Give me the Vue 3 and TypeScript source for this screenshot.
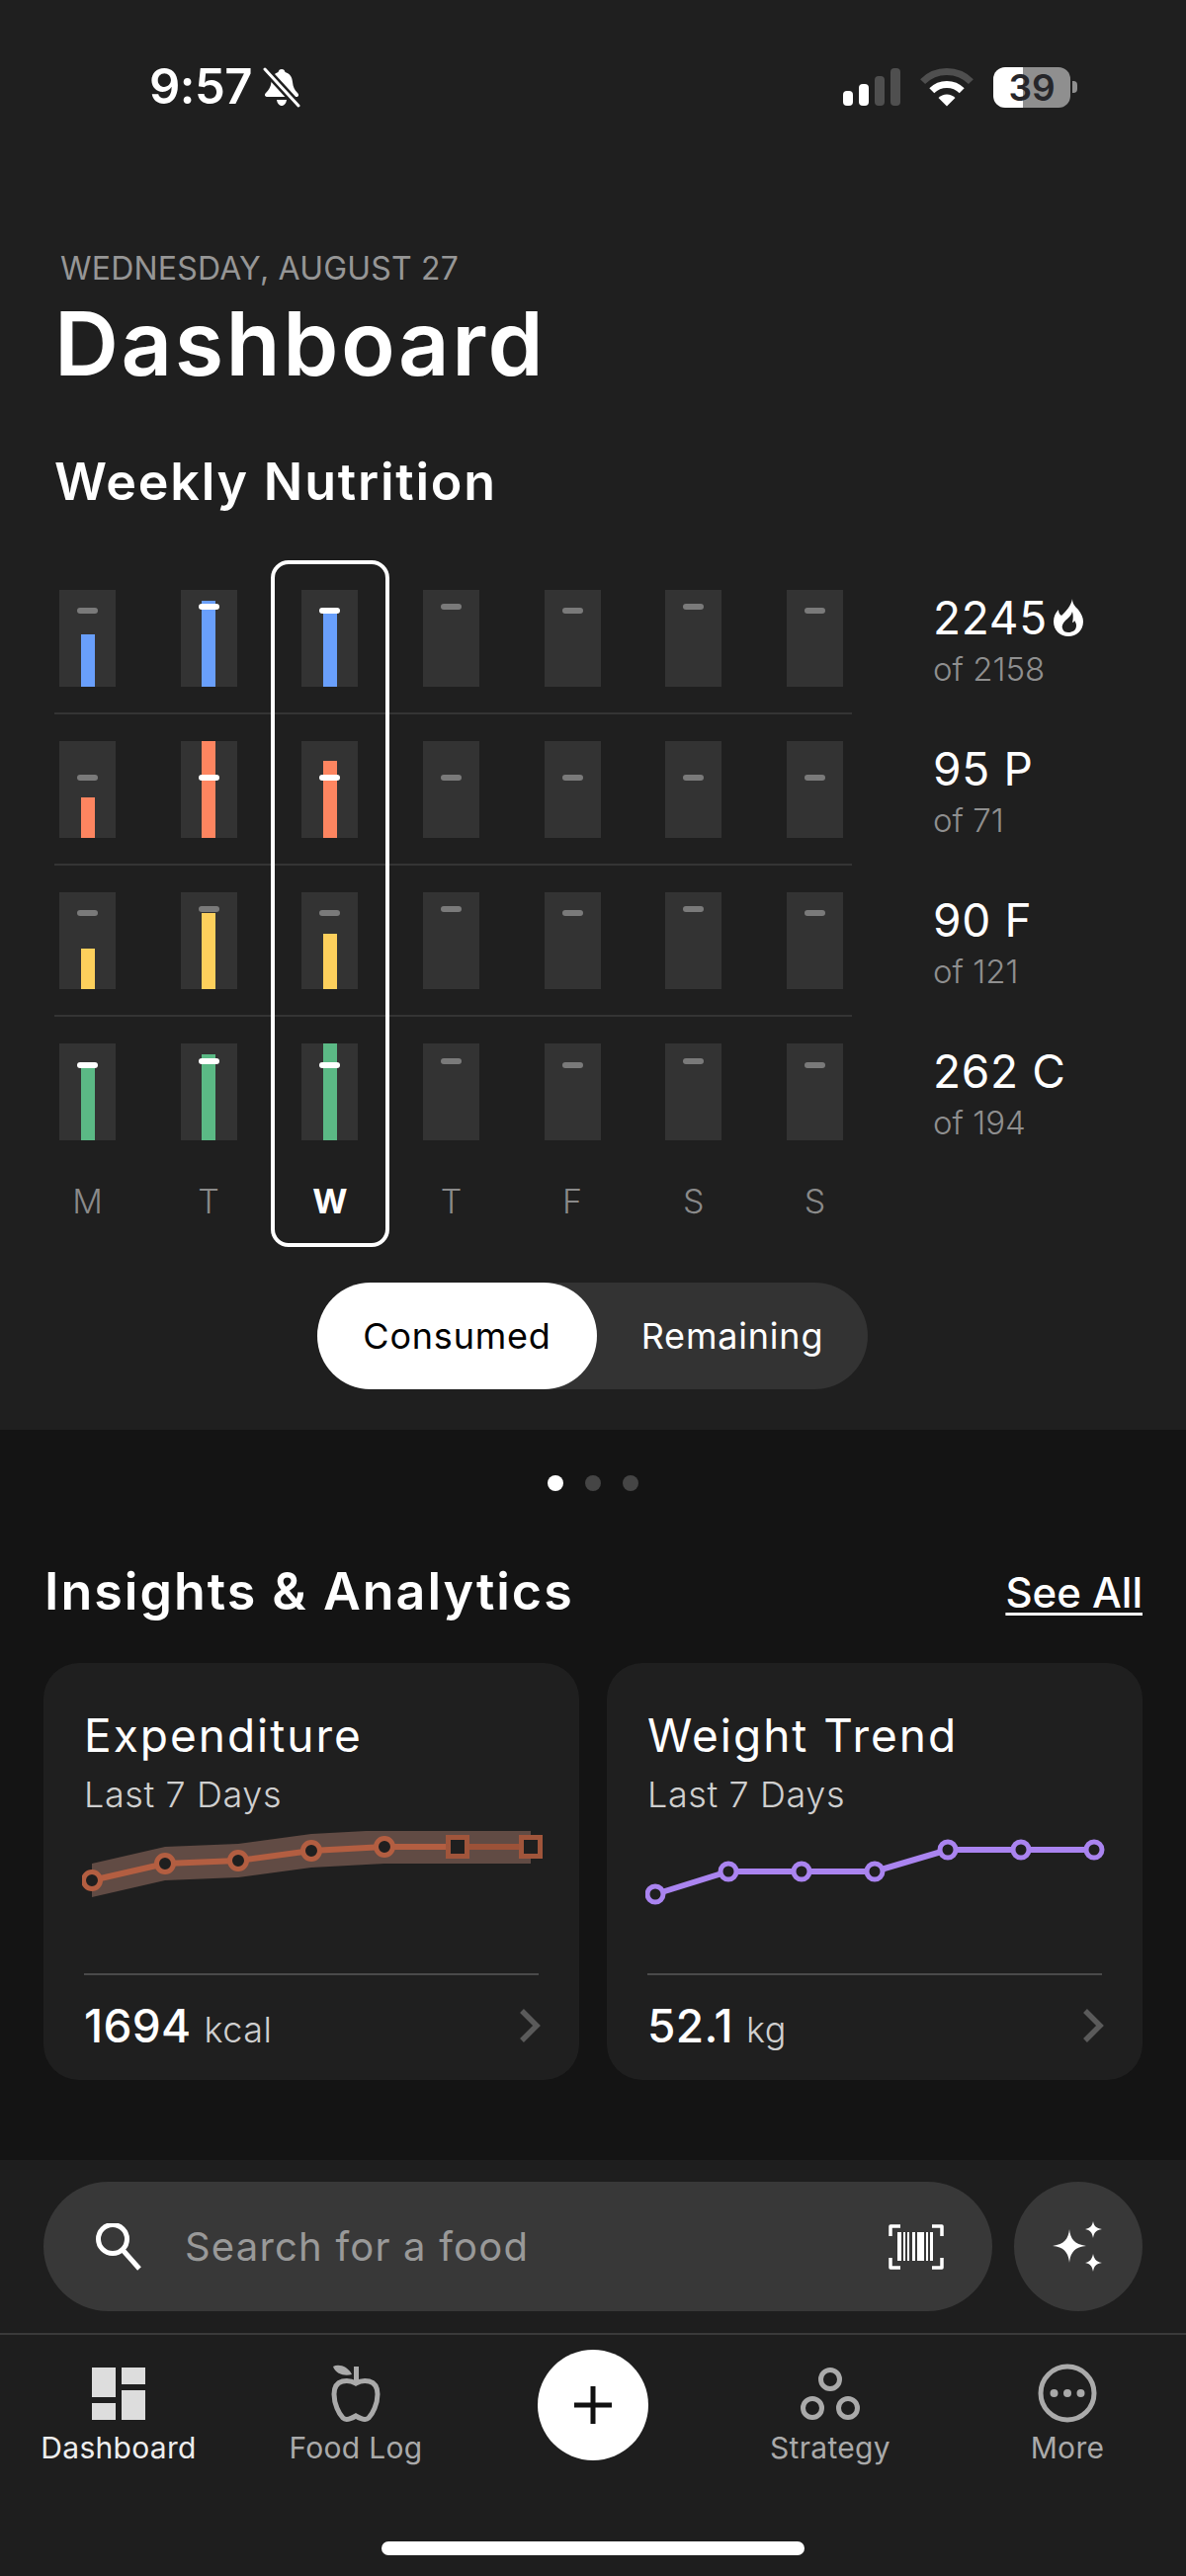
<script setup lang="ts">
type Bar = { fill: number; mark: number; lit?: boolean }

// fill height and marker offset inside a 98px track
const rows: { color: string; bars: Bar[] }[] = [
  {
    color: '#699ffb',
    bars: [
      { fill: 53, mark: 21 },
      { fill: 87, mark: 17, lit: true },
      { fill: 77, mark: 21, lit: true },
      { fill: 0, mark: 17 },
      { fill: 0, mark: 21 },
      { fill: 0, mark: 17 },
      { fill: 0, mark: 21 },
    ],
  },
  {
    color: '#fd8560',
    bars: [
      { fill: 41, mark: 37 },
      { fill: 98, mark: 37, lit: true },
      { fill: 78, mark: 37, lit: true },
      { fill: 0, mark: 37 },
      { fill: 0, mark: 37 },
      { fill: 0, mark: 37 },
      { fill: 0, mark: 37 },
    ],
  },
  {
    color: '#fdd05c',
    bars: [
      { fill: 41, mark: 21 },
      { fill: 77, mark: 17 },
      { fill: 56, mark: 21 },
      { fill: 0, mark: 17 },
      { fill: 0, mark: 21 },
      { fill: 0, mark: 17 },
      { fill: 0, mark: 21 },
    ],
  },
  {
    color: '#5bb985',
    bars: [
      { fill: 75, mark: 22, lit: true },
      { fill: 87, mark: 18, lit: true },
      { fill: 98, mark: 22, lit: true },
      { fill: 0, mark: 18 },
      { fill: 0, mark: 22 },
      { fill: 0, mark: 18 },
      { fill: 0, mark: 22 },
    ],
  },
]

const stats = [
  { value: '2245', goal: 'of 2158', flame: true },
  { value: '95 P', goal: 'of 71' },
  { value: '90 F', goal: 'of 121' },
  { value: '262 C', goal: 'of 194' },
]

const days = ['M', 'T', 'W', 'T', 'F', 'S', 'S']

const xs = [10, 84, 158, 232, 306, 380, 454]
const expenditureY = [50, 33, 30, 20, 16, 16, 16]
const weightY = [46, 23, 23, 23, 1, 1, 1]

function line(ys: number[], offset = 0): string {
  return ys.map((y, i) => `${xs[i]},${y + offset}`).join(' ')
}

const band = `${line(expenditureY, -17)} ${line(expenditureY, 17).split(' ').reverse().join(' ')}`
</script>

<template>
  <div class="page">
    <section class="hero">
      <div class="status">
        <div class="status-left">
          <span class="clock">9:57</span>
          <svg class="bell" width="38" height="41" viewBox="0 0 38 41">
            <path d="M19 2c2 0 3 1 3.500 3 5 1.500 7 5 7.500 10 .5 5 2 8 5 11 2 2 1 4-1 4H5c-3 0-4-2-2-4 3-3 5-6 5.500-11C9 10 11 6.500 15.500 5 16 3 17 2 19 2z" fill="#fff" />
            <path d="M14 33h10c-.5 3.500-2.500 6-5 6s-4.500-2.500-5-6z" fill="#fff" />
            <path d="M2 2l34 37" stroke="#1f1f1f" stroke-width="8" />
            <path d="M2 2l34 37" stroke="#fff" stroke-width="3" stroke-linecap="round" />
          </svg>
        </div>
        <div class="status-right">
          <div class="signal">
            <i class="on" style="height: 15px"></i>
            <i class="on" style="height: 22px"></i>
            <i style="height: 30px"></i>
            <i style="height: 38px"></i>
          </div>
          <svg class="wifi" width="54" height="40" viewBox="0 0 54 40">
            <path d="M2.600 14.600a34.500 34.500 0 0 1 48.800 0" fill="none" stroke="#4f4f4f" stroke-width="7" />
            <path d="M11.800 23.800a21.500 21.500 0 0 1 30.400 0" fill="none" stroke="#fff" stroke-width="7" />
            <path d="M27 39.500l-8.500-8.500a12 12 0 0 1 17 0z" fill="#fff" />
          </svg>
          <div class="battery">
            <div class="battery-body"><span>39</span></div>
            <i class="battery-nub"></i>
          </div>
        </div>
      </div>

      <p class="date">WEDNESDAY, AUGUST 27</p>
      <h1 class="title">Dashboard</h1>
      <h2 class="weekly">Weekly Nutrition</h2>

      <div class="nutrition">
        <div class="chart">
          <div v-for="(row, r) in rows" :key="r" class="row">
            <div v-for="(bar, b) in row.bars" :key="b" class="track">
              <div class="fill" :style="{ height: bar.fill + 'px', background: row.color }"></div>
              <div class="mark" :class="{ lit: bar.lit }" :style="{ top: bar.mark + 'px' }"></div>
            </div>
          </div>
          <div class="days">
            <span v-for="(day, d) in days" :key="d" class="day" :class="{ today: d === 2 }">{{ day }}</span>
          </div>
          <div class="selected"></div>
        </div>
        <div class="stats">
          <div v-for="stat in stats" :key="stat.value" class="stat">
            <div class="stat-value">
              <span>{{ stat.value }}</span>
              <svg v-if="stat.flame" class="flame" width="30" height="38" viewBox="0 0 30 38">
                <path fill-rule="evenodd" d="M19 0c0 5 3 8 6 11 3 4 5 8 5 12 0 9-7 15-15 15S0 32 0 23c0-5 2-9 5-12 0 3 1 5 3 6 4-4 10-10 11-17zM19 13c-1 4-4 6-7 9-3 3-4 6-3 8 1 3 3 4 6 4 4 0 8-2 8-7 0-2-1-4-2-5 0 1-1 2-2 2 1-4 1-7 0-11z" fill="#fff" />
              </svg>
            </div>
            <div class="stat-goal">{{ stat.goal }}</div>
          </div>
        </div>
      </div>

      <div class="toggle">
        <span class="toggle-on">Consumed</span>
        <span class="toggle-off">Remaining</span>
      </div>
    </section>

    <section class="lower">
      <div class="dots">
        <i class="active"></i>
        <i></i>
        <i></i>
      </div>
      <div class="insights-head">
        <h2>Insights &amp; Analytics</h2>
        <span class="see-all">See All</span>
      </div>
      <div class="cards">
        <div class="card">
          <div class="card-title">Expenditure</div>
          <div class="card-sub">Last 7 Days</div>
          <svg class="spark" width="470" height="76" viewBox="0 0 470 76">
            <polygon :points="band" fill="#614b44" />
            <polyline :points="line(expenditureY.slice(0, 6))" fill="none" stroke="#b35e41" stroke-width="6" />
            <path d="M380 16h74" stroke="#9c5238" stroke-width="6" />
            <circle v-for="i in 5" :key="i" :cx="xs[i - 1]" :cy="expenditureY[i - 1]" r="8.500" fill="#1f1f1f" stroke="#b35e41" stroke-width="5" />
            <rect x="370.500" y="6.500" width="19" height="19" fill="#1f1f1f" stroke="#a0553b" stroke-width="5" />
            <rect x="444.500" y="6.500" width="19" height="19" fill="#1f1f1f" stroke="#a0553b" stroke-width="5" />
          </svg>
          <div class="card-foot">
            <span class="num">1694</span>
            <span class="unit">kcal</span>
            <svg class="chev" width="22" height="34" viewBox="0 0 22 34">
              <path d="M3 2l15 15L3 32" fill="none" stroke="#5a5a5a" stroke-width="5.500" />
            </svg>
          </div>
        </div>
        <div class="card">
          <div class="card-title">Weight Trend</div>
          <div class="card-sub">Last 7 Days</div>
          <svg class="spark" width="470" height="76" viewBox="0 0 470 76">
            <polyline :points="line(weightY, 18)" fill="none" stroke="#aa84f0" stroke-width="6" />
            <circle v-for="(y, i) in weightY" :key="i" :cx="xs[i]" :cy="y + 18" r="8" fill="#1f1f1f" stroke="#aa84f0" stroke-width="5" />
          </svg>
          <div class="card-foot">
            <span class="num">52.1</span>
            <span class="unit">kg</span>
            <svg class="chev" width="22" height="34" viewBox="0 0 22 34">
              <path d="M3 2l15 15L3 32" fill="none" stroke="#5a5a5a" stroke-width="5.500" />
            </svg>
          </div>
        </div>
      </div>
    </section>

    <section class="dock">
      <div class="search-row">
        <div class="search">
          <svg width="48" height="48" viewBox="0 0 48 48">
            <circle cx="18" cy="16" r="14.500" fill="none" stroke="#fff" stroke-width="5" />
            <path d="M29 28l16 18" stroke="#fff" stroke-width="5" />
          </svg>
          <span class="placeholder">Search for a food</span>
          <svg class="barcode" width="56" height="46" viewBox="0 0 56 46">
            <path d="M12 2H2v10M44 2h10v10M12 44H2V34M44 44h10V34" fill="none" stroke="#fff" stroke-width="3.500" stroke-linejoin="round" />
            <path d="M9 8h4v29H9zM15 8h2v29h-2zM19 8h2v29h-2zM24 8h3v29h-3zM29 8h7v29h-7zM38 8h2v29h-2zM42 8h3v29h-3z" fill="#fff" />
          </svg>
        </div>
        <div class="magic">
          <svg width="52" height="52" viewBox="0 0 52 52">
            <path d="M17 8c1 10 5 15 17 17-12 1-16 7-17 17-1-10-5-16-17-17 12-2 16-7 17-17z" fill="#fff" />
            <path d="M41 0c1 5 3 7 9 8-6 1-8 3-9 9-1-6-3-8-8-9 5-1 7-3 8-8z" fill="#fff" />
            <path d="M41 33c1 5 3 8 9 9-6 1-8 3-9 9-1-6-3-8-8-9 5-1 7-4 8-9z" fill="#fff" />
          </svg>
        </div>
      </div>

      <nav class="nav">
        <div class="nav-item active">
          <div class="nav-icon">
            <div class="tiles">
              <div class="tile-col">
                <i style="height: 30px"></i>
                <i style="height: 17px"></i>
              </div>
              <div class="tile-col">
                <i style="height: 17px"></i>
                <i style="height: 30px"></i>
              </div>
            </div>
          </div>
          <span>Dashboard</span>
        </div>
        <div class="nav-item">
          <div class="nav-icon">
            <svg width="50" height="58" viewBox="0 0 50 58">
              <path d="M25 19C18 15 3 14 3 30c0 10 5 20 9 24 3 3 8 1 13-2 5 3 10 5 13 2 4-4 9-14 9-24 0-16-15-15-22-11z" fill="none" stroke="#aaa" stroke-width="5" />
              <path d="M23 2h5v16h-5z" fill="#aaa" />
              <path d="M2 2c6-3 15 0 19 8-7 2-16 0-19-8z" fill="#aaa" />
            </svg>
          </div>
          <span>Food Log</span>
        </div>
        <div class="nav-item">
          <div class="add">
            <svg width="40" height="40" viewBox="0 0 40 40">
              <path d="M20 1v38M1 20h38" stroke="#111" stroke-width="5" />
            </svg>
          </div>
        </div>
        <div class="nav-item">
          <div class="nav-icon">
            <svg width="60" height="60" viewBox="0 0 60 60">
              <circle cx="30" cy="16" r="9.500" fill="none" stroke="#aaa" stroke-width="5" />
              <circle cx="12" cy="45" r="9.500" fill="none" stroke="#aaa" stroke-width="5" />
              <circle cx="48" cy="45" r="9.500" fill="none" stroke="#aaa" stroke-width="5" />
            </svg>
          </div>
          <span>Strategy</span>
        </div>
        <div class="nav-item">
          <div class="nav-icon">
            <svg width="60" height="60" viewBox="0 0 60 60">
              <circle cx="30" cy="30" r="27" fill="none" stroke="#aaa" stroke-width="5" />
              <circle cx="16.500" cy="30" r="4" fill="#aaa" />
              <circle cx="30" cy="30" r="4" fill="#aaa" />
              <circle cx="43.500" cy="30" r="4" fill="#aaa" />
            </svg>
          </div>
          <span>More</span>
        </div>
      </nav>
      <div class="home"></div>
    </section>
  </div>
</template>

<style>
body {
  background: #141414;
}
</style>

<style scoped>
.page {
  color: #fff;
  font-family: Inter, 'Noto Sans', sans-serif;
  height: 2607px;
  overflow: hidden;
  width: 1200px;
}

.hero {
  background: #1f1f1f;
  height: 1447px;
}

.status {
  align-items: center;
  display: flex;
  height: 176px;
  justify-content: space-between;
  padding: 0 110px 0 151px;
}

.status-left {
  align-items: center;
  display: flex;
  gap: 11px;
}

.clock {
  font-size: 49px;
  font-weight: 600;
  letter-spacing: -0.5px;
  line-height: 50px;
}

.status-right {
  align-items: center;
  display: flex;
}

.signal {
  align-items: flex-end;
  display: flex;
  gap: 6px;
  height: 38px;
  margin-right: 20px;
}

.signal i {
  background: #4f4f4f;
  border-radius: 4px;
  width: 10px;
}

.signal i.on {
  background: #fff;
}

.wifi {
  margin-right: 20px;
}

.battery {
  align-items: center;
  display: flex;
  gap: 2px;
}

.battery-body {
  background: linear-gradient(to right, #fff 0 30px, #8f8f8f 30px);
  border-radius: 12px;
  color: #26262a;
  font-size: 37px;
  font-weight: 600;
  height: 41px;
  line-height: 41px;
  text-align: center;
  width: 78px;
}

.battery-nub {
  background: #8f8f8f;
  border-radius: 0 4px 4px 0;
  height: 12px;
  width: 5px;
}

.date {
  color: #969696;
  font-size: 32px;
  letter-spacing: 0.2px;
  line-height: 40px;
  margin: 76px 0 0 61px;
}

.title {
  font-size: 90px;
  font-weight: 600;
  letter-spacing: 2.5px;
  line-height: 100px;
  margin: 6px 0 0 55px;
}

.weekly {
  font-size: 52px;
  font-weight: 600;
  letter-spacing: 1.8px;
  line-height: 60px;
  margin: 60px 0 0 55px;
}

.nutrition {
  display: flex;
  margin: 79px 0 0 55px;
}

.chart {
  position: relative;
  width: 807px;
}

.row {
  border-bottom: 2px solid #343434;
  display: flex;
  justify-content: space-between;
  margin-bottom: 27px;
  padding: 0 9px 26px 5px;
}

.row:nth-child(4) {
  border-bottom: 0;
  margin-bottom: 0;
  padding-bottom: 0;
}

.track {
  background: #333;
  height: 98px;
  position: relative;
  width: 57px;
}

.fill {
  bottom: 0;
  left: 21.500px;
  position: absolute;
  width: 14px;
}

.mark {
  background: #7a7a7a;
  border-radius: 3px;
  height: 6px;
  left: 18px;
  margin-top: -3px;
  position: absolute;
  width: 21px;
}

.mark.lit {
  background: #fff;
}

.days {
  display: flex;
  justify-content: space-between;
  margin-top: 40px;
  padding: 0 9px 0 5px;
}

.day {
  color: #8a8a8a;
  font-size: 34px;
  font-weight: 300;
  line-height: 44px;
  text-align: center;
  width: 57px;
}

.day.today {
  color: #fff;
  font-weight: 700;
}

.selected {
  border: 4px solid #fff;
  border-radius: 18px;
  box-sizing: border-box;
  height: 695px;
  left: 219px;
  position: absolute;
  top: -30px;
  width: 120px;
}

.stats {
  margin-left: 82px;
}

.stat {
  height: 153px;
}

.stat-value {
  align-items: center;
  display: flex;
  font-size: 46px;
  gap: 6px;
  letter-spacing: 0.7px;
  line-height: 56px;
}

.stat-goal {
  color: #8f8f8f;
  font-size: 33px;
  font-weight: 300;
  line-height: 40px;
  margin-top: 4px;
}

.toggle {
  align-items: center;
  background: #333;
  border-radius: 54px;
  display: flex;
  font-size: 36px;
  height: 108px;
  letter-spacing: 0.8px;
  margin: 60px 0 0 321px;
  width: 557px;
}

.toggle-on {
  background: #fff;
  border-radius: 54px;
  color: #000;
  line-height: 108px;
  text-align: center;
  width: 283px;
}

.toggle-off {
  flex: 1;
  text-align: center;
}

.lower {
  background: #141414;
  box-sizing: border-box;
  height: 739px;
  padding-top: 46px;
}

.dots {
  display: flex;
  gap: 22px;
  justify-content: center;
}

.dots i {
  background: #454545;
  border-radius: 50%;
  height: 16px;
  width: 16px;
}

.dots i.active {
  background: #fff;
}

.insights-head {
  align-items: center;
  display: flex;
  justify-content: space-between;
  margin-top: 72px;
  padding: 0 44px 0 45px;
}

.insights-head h2 {
  font-size: 52px;
  font-weight: 600;
  letter-spacing: 2px;
  line-height: 60px;
  margin: 0;
}

.see-all {
  font-size: 42px;
  font-weight: 500;
  text-decoration: underline;
  text-decoration-thickness: 3px;
  text-underline-offset: 5px;
}

.cards {
  display: flex;
  gap: 28px;
  margin-top: 42px;
  padding: 0 44px;
}

.card {
  background: #1f1f1f;
  border-radius: 36px;
  box-sizing: border-box;
  height: 422px;
  padding: 46px 41px 0;
  width: 542px;
}

.card-title {
  font-size: 46px;
  letter-spacing: 2px;
  line-height: 54px;
}

.card-sub {
  color: #cfcfcf;
  font-size: 36px;
  font-weight: 300;
  letter-spacing: 0.6px;
  line-height: 44px;
  margin-top: 11px;
}

.spark {
  display: block;
  margin: 15px 0 0 -2px;
}

.card-foot {
  align-items: baseline;
  border-top: 2px solid #4a4a4a;
  display: flex;
  margin-top: 68px;
  padding-top: 23px;
  width: 460px;
}

.num {
  font-size: 46px;
  font-weight: 500;
  letter-spacing: 0.3px;
  line-height: 56px;
}

.unit {
  color: #cfcfcf;
  font-size: 36px;
  font-weight: 300;
  letter-spacing: 0.5px;
  margin-left: 13px;
}

.chev {
  align-self: center;
  margin: 0 -2px 0 auto;
}

.dock {
  background: #1e1e1e;
  height: 421px;
}

.search-row {
  border-bottom: 2px solid #3a3a3a;
  display: flex;
  gap: 22px;
  padding: 22px 44px;
}

.search {
  align-items: center;
  background: #383838;
  border-radius: 66px;
  box-sizing: border-box;
  display: flex;
  height: 131px;
  padding: 0 49px 0 52px;
  width: 960px;
}

.placeholder {
  color: #999;
  font-size: 40px;
  letter-spacing: 1.2px;
  margin-left: 43px;
}

.barcode {
  margin-left: auto;
}

.magic {
  align-items: center;
  background: #383838;
  border-radius: 50%;
  display: flex;
  height: 131px;
  justify-content: center;
  width: 130px;
}

.nav {
  display: grid;
  grid-template-columns: repeat(5, 240px);
  padding-top: 29px;
}

.nav-item {
  align-items: center;
  color: #aaa;
  display: flex;
  flex-direction: column;
  font-size: 30px;
  letter-spacing: 0.3px;
  line-height: 30px;
}

.nav-item.active {
  color: #eee;
}

.nav-icon {
  align-items: center;
  display: flex;
  height: 60px;
  justify-content: center;
  margin-bottom: 10px;
}

.tiles {
  display: flex;
  gap: 6px;
}

.tile-col {
  display: flex;
  flex-direction: column;
  gap: 6px;
}

.tile-col i {
  background: #ddd;
  display: block;
  width: 24px;
}

.add {
  align-items: center;
  background: #fff;
  border-radius: 50%;
  display: flex;
  height: 112px;
  justify-content: center;
  margin-top: -14px;
  width: 112px;
}

.home {
  background: #fff;
  border-radius: 7px;
  height: 14px;
  margin: 80px auto 0;
  width: 428px;
}
</style>
